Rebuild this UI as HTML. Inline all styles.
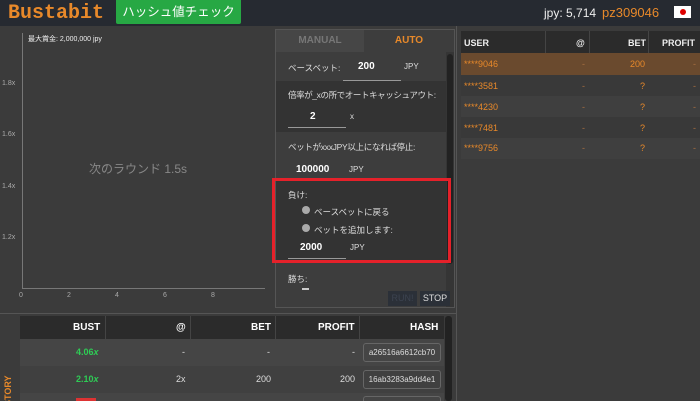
<!DOCTYPE html><html><head><meta charset="utf-8"><style>
*{margin:0;padding:0;box-sizing:border-box}
html,body{width:700px;height:401px;overflow:hidden}
body{background:#3b3b3b;font-family:"Liberation Sans","Noto Sans CJK JP",sans-serif;color:#ddd;position:relative;font-size:9px}
.abs{position:absolute;white-space:nowrap}
.hdr{left:0;top:0;width:700px;height:26px;background:#262a31}
.logo{left:8px;top:2px;font-family:"Liberation Mono",monospace;font-weight:bold;font-size:20px;color:#e8892a}
.hbtn{left:116px;top:0;width:125px;height:24px;background:#27a844;color:#fff;font-size:12.5px;line-height:24px;text-align:center;border-radius:0 0 2px 2px}
.ax{color:#aaa;font-size:7px}
.p span{font-size:8.5px}
</style></head><body>
<div class="abs hdr"></div>
<div class="abs logo">Bustabit</div>
<div class="abs hbtn">ハッシュ値チェック</div>
<div class="abs" style="left:544px;top:6px;font-size:12px;color:#eee">jpy: 5,714</div>
<div class="abs" style="left:602px;top:5px;font-size:13px;color:#e8892a">pz309046</div>
<div class="abs" style="left:674px;top:6px;width:17px;height:12px;background:#fff"><div style="margin:3px 6px;width:6px;height:6px;border-radius:50%;background:#d00"></div></div>

<div class="abs" style="left:22px;top:33px;width:1px;height:255px;background:#777"></div>
<div class="abs" style="left:22px;top:288px;width:243px;height:1px;background:#777"></div>
<div class="abs" style="left:28px;top:34px;font-size:7px;color:#eee">最大賞金: 2,000,000 jpy</div>
<div class="abs ax" style="left:2px;top:80px">1.8x</div>
<div class="abs ax" style="left:2px;top:131px">1.6x</div>
<div class="abs ax" style="left:2px;top:183px">1.4x</div>
<div class="abs ax" style="left:2px;top:234px">1.2x</div>
<div class="abs ax" style="left:19px;top:292px">0</div>
<div class="abs ax" style="left:67px;top:292px">2</div>
<div class="abs ax" style="left:115px;top:292px">4</div>
<div class="abs ax" style="left:163px;top:292px">6</div>
<div class="abs ax" style="left:211px;top:292px">8</div>
<div class="abs" style="left:89px;top:160px;font-size:12px;color:#888">次のラウンド 1.5s</div>

<div class="abs p" style="left:275px;top:29px;width:180px;height:279px;border:1px solid #555;background:#3d3d3d;overflow:hidden">
 <div class="abs" style="left:0;top:0;width:88px;height:22px;background:#464646;color:#777;font-weight:bold;font-size:10px;text-align:center;line-height:22px">MANUAL</div>
 <div class="abs" style="left:88px;top:0;width:90px;height:22px;color:#e8892a;font-weight:bold;font-size:10px;text-align:center;line-height:22px">AUTO</div>
 <div class="abs" style="left:0;top:22px;width:170px;height:29px;background:#3d3d3d"><span class="abs" style="left:12px;top:10px">ベースベット:</span><span class="abs" style="left:82px;top:9px;font-weight:bold;font-size:10px;color:#fff">200</span><span class="abs" style="left:128px;top:10px;font-size:8px">JPY</span><div class="abs" style="left:67px;top:28px;width:58px;height:1px;background:#999"></div></div>
 <div class="abs" style="left:0;top:51px;width:170px;height:51px;background:#333"><span class="abs" style="left:12px;top:8px;letter-spacing:-0.4px">倍率が_xの所でオートキャッシュアウト:</span><span class="abs" style="left:34px;top:30px;font-weight:bold;font-size:10px;color:#fff">2</span><span class="abs" style="left:74px;top:31px;font-size:8px">x</span><div class="abs" style="left:12px;top:46px;width:58px;height:1px;background:#999"></div></div>
 <div class="abs" style="left:0;top:102px;width:170px;height:47px;background:#3d3d3d"><span class="abs" style="left:12px;top:9px;letter-spacing:-0.3px">ベットがxxxJPY以上になれば停止:</span><span class="abs" style="left:20px;top:32px;font-weight:bold;font-size:10px;color:#fff">100000</span><span class="abs" style="left:73px;top:33px;font-size:8px">JPY</span></div>
 <div class="abs" style="left:0;top:149px;width:170px;height:84px;background:#333"><span class="abs" style="left:12px;top:10px">負け:</span>
  <div class="abs" style="left:26px;top:27px;width:8px;height:8px;border-radius:50%;background:#aaa"></div><span class="abs" style="left:38px;top:27px">ベースベットに戻る</span>
  <div class="abs" style="left:26px;top:45px;width:8px;height:8px;border-radius:50%;background:#aaa"></div><span class="abs" style="left:38px;top:45px">ベットを追加します:</span>
  <span class="abs" style="left:24px;top:63px;font-weight:bold;font-size:10px;color:#fff">2000</span><span class="abs" style="left:74px;top:64px;font-size:8px">JPY</span><div class="abs" style="left:12px;top:79px;width:58px;height:1px;background:#999"></div></div>
 <span class="abs" style="left:12px;top:243px">勝ち:</span>
 <div class="abs" style="left:26px;top:258px;width:7px;height:2px;background:#ccc"></div>
 <div class="abs" style="left:170px;top:22px;width:8px;height:258px;background:#353535"></div>
 <div class="abs" style="left:171px;top:24px;width:6px;height:210px;border-radius:3px;background:#222"></div>
 <div class="abs" style="left:112px;top:261px;width:29px;height:15px;background:#2b3038;color:#3c4350;text-align:center;line-height:15px">RUN!</div>
 <div class="abs" style="left:144px;top:261px;width:30px;height:15px;background:#2b3038;color:#ddd;text-align:center;line-height:15px">STOP</div>
</div>
<div class="abs" style="left:272px;top:178px;width:179px;height:85px;border:3px solid #e5212a"></div>

<div class="abs" style="left:456px;top:26px;width:1px;height:375px;background:#555"></div>
<div class="abs" style="left:461px;top:31px;width:239px;height:22px;background:#2b2b2b"></div>
<div class="abs" style="left:545px;top:31px;width:1px;height:22px;background:#444"></div>
<div class="abs" style="left:589px;top:31px;width:1px;height:22px;background:#444"></div>
<div class="abs" style="left:648px;top:31px;width:1px;height:22px;background:#444"></div>
<div class="abs" style="left:464px;top:38px;font-weight:bold;font-size:9px;color:#eee">USER</div>
<div class="abs" style="left:576px;top:38px;font-weight:bold;color:#eee">@</div>
<div class="abs" style="left:628px;top:38px;font-weight:bold;color:#eee">BET</div>
<div class="abs" style="left:662px;top:38px;font-weight:bold;color:#eee">PROFIT</div>
<div class="abs" style="left:461px;top:53px;width:239px;height:22px;background:#6a4a2e"></div>
<div class="abs" style="left:461px;top:96px;width:239px;height:21px;background:#3f3f3f"></div>
<div class="abs" style="left:461px;top:138px;width:239px;height:21px;background:#3f3f3f"></div>
<div class="abs" style="left:461px;top:75px;width:239px;height:21px;background:#393939"></div>
<div class="abs" style="left:461px;top:117px;width:239px;height:21px;background:#393939"></div>
<div class="abs" style="left:464px;top:59px;color:#e8892a">****9046</div><div class="abs" style="left:582px;top:59px;color:#aa7040">-</div><div class="abs" style="left:630px;top:59px;color:#e8892a">200</div><div class="abs" style="left:693px;top:59px;color:#aa7040">-</div>
<div class="abs" style="left:464px;top:81px;color:#e8892a">****3581</div><div class="abs" style="left:582px;top:81px;color:#aa7040">-</div><div class="abs" style="left:640px;top:81px;color:#e8892a">?</div><div class="abs" style="left:693px;top:81px;color:#aa7040">-</div>
<div class="abs" style="left:464px;top:102px;color:#e8892a">****4230</div><div class="abs" style="left:582px;top:102px;color:#aa7040">-</div><div class="abs" style="left:640px;top:102px;color:#e8892a">?</div><div class="abs" style="left:693px;top:102px;color:#aa7040">-</div>
<div class="abs" style="left:464px;top:123px;color:#e8892a">****7481</div><div class="abs" style="left:582px;top:123px;color:#aa7040">-</div><div class="abs" style="left:640px;top:123px;color:#e8892a">?</div><div class="abs" style="left:693px;top:123px;color:#aa7040">-</div>
<div class="abs" style="left:464px;top:143px;color:#e8892a">****9756</div><div class="abs" style="left:582px;top:143px;color:#aa7040">-</div><div class="abs" style="left:640px;top:143px;color:#e8892a">?</div><div class="abs" style="left:693px;top:143px;color:#aa7040">-</div>

<div class="abs" style="left:0;top:313px;width:456px;height:1px;background:#555"></div>
<div class="abs" style="left:0;top:370px;width:20px;height:31px;overflow:hidden"><div style="transform:rotate(-90deg);transform-origin:0 0;position:absolute;left:3px;top:45px;color:#e8892a;font-weight:bold;font-size:9px;white-space:nowrap">HISTORY</div></div>
<div class="abs" style="left:20px;top:316px;width:424px;height:23px;background:#2b2b2b"></div>
<div class="abs" style="left:105px;top:316px;width:1px;height:85px;background:#444"></div>
<div class="abs" style="left:190px;top:316px;width:1px;height:85px;background:#444"></div>
<div class="abs" style="left:275px;top:316px;width:1px;height:85px;background:#444"></div>
<div class="abs" style="left:359px;top:316px;width:1px;height:85px;background:#444"></div>
<div class="abs" style="left:20px;top:339px;width:424px;height:27px;background:#454545"></div>
<div class="abs" style="left:20px;top:366px;width:424px;height:27px;background:#404040"></div>
<div class="abs" style="left:20px;top:393px;width:424px;height:8px;background:#454545"></div>
<div class="abs" style="left:445px;top:316px;width:7px;height:85px;border-radius:3px;background:#222"></div>
<div class="abs" style="left:73px;top:322px;font-weight:bold;font-size:10px;color:#fff">BUST</div>
<div class="abs" style="left:176px;top:322px;font-weight:bold;font-size:10px;color:#fff">@</div>
<div class="abs" style="left:251px;top:322px;font-weight:bold;font-size:10px;color:#fff">BET</div>
<div class="abs" style="left:318px;top:322px;font-weight:bold;font-size:10px;color:#fff">PROFIT</div>
<div class="abs" style="left:410px;top:322px;font-weight:bold;font-size:10px;color:#fff">HASH</div>
<div class="abs" style="left:76px;top:347px;font-weight:bold;color:#2ecc55">4.06<i>x</i></div>
<div class="abs" style="left:182px;top:347px">-</div><div class="abs" style="left:267px;top:347px">-</div><div class="abs" style="left:352px;top:347px">-</div>
<div class="abs" style="left:76px;top:374px;font-weight:bold;color:#2ecc55">2.10<i>x</i></div>
<div class="abs" style="left:176px;top:374px">2x</div><div class="abs" style="left:256px;top:374px">200</div><div class="abs" style="left:340px;top:374px">200</div>
<div class="abs" style="left:363px;top:343px;width:78px;height:19px;border:1px solid #666;border-radius:3px;font-size:8px;text-align:center;line-height:17px">a26516a6612cb70</div>
<div class="abs" style="left:363px;top:370px;width:78px;height:19px;border:1px solid #666;border-radius:3px;font-size:8px;text-align:center;line-height:17px">16ab3283a9dd4e1</div>
<div class="abs" style="left:363px;top:396px;width:78px;height:5px;border:1px solid #666;border-bottom:none;border-radius:3px 3px 0 0"></div>
<div class="abs" style="left:76px;top:398px;width:20px;height:3px;background:#d33"></div>
</body></html>
